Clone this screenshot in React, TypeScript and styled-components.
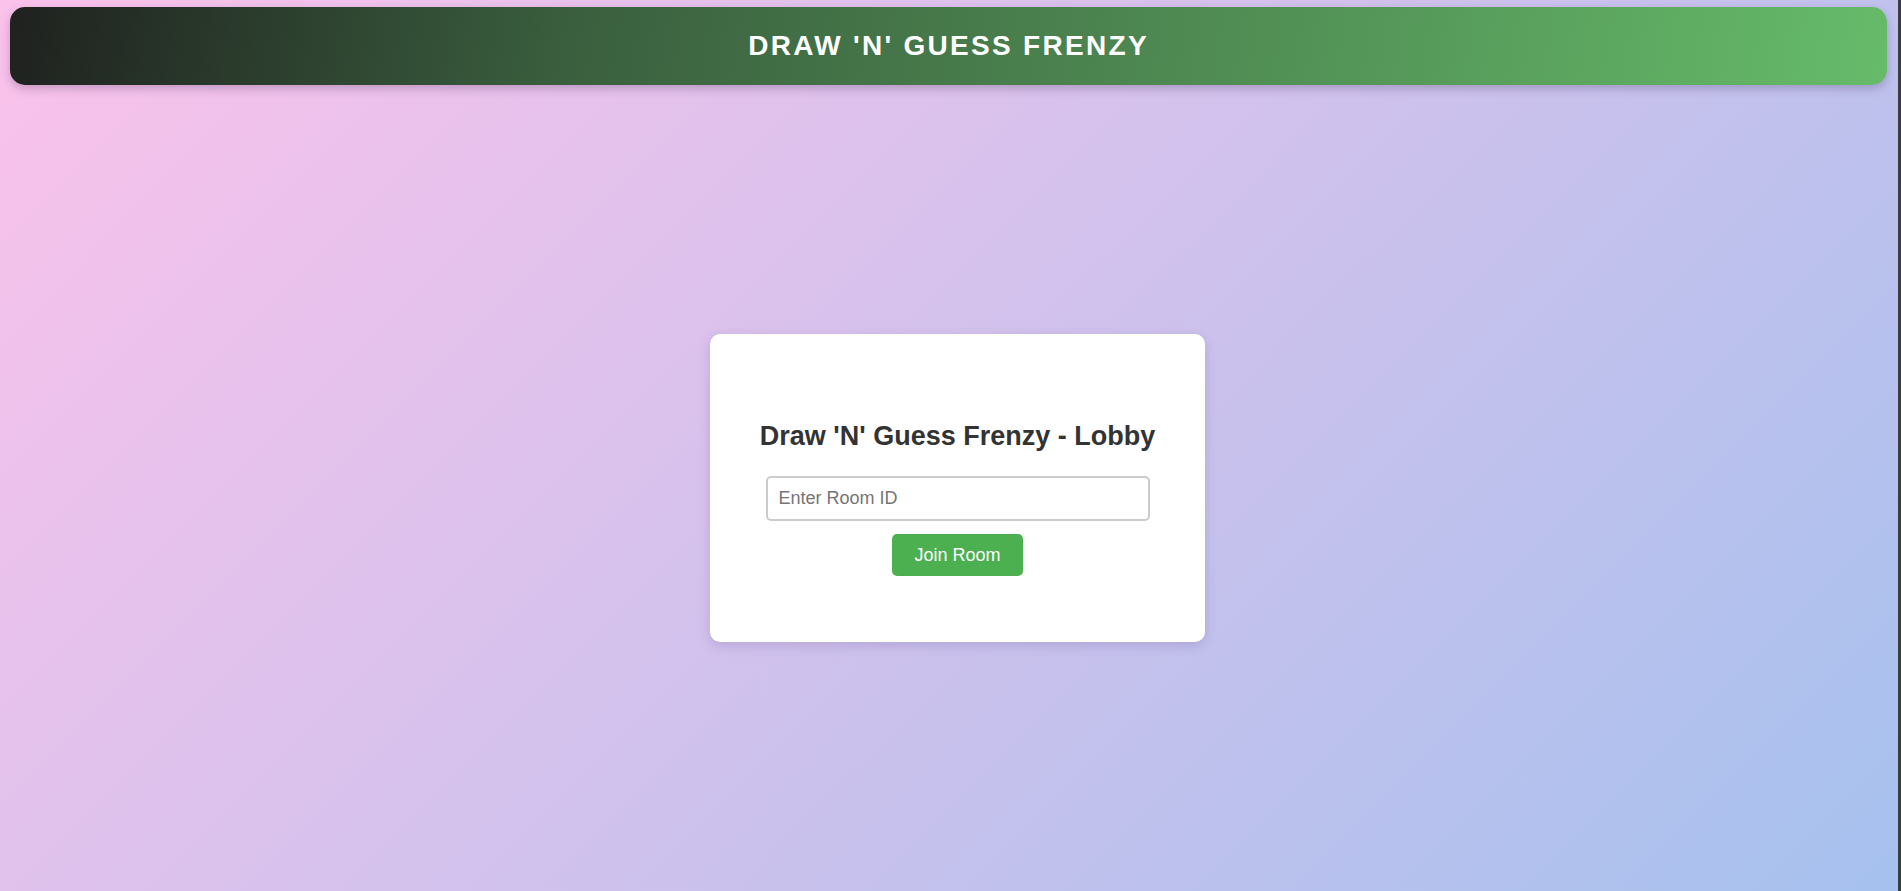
import React, { useState } from "react";
import styled, { createGlobalStyle } from "styled-components";

const GlobalStyle = createGlobalStyle`
  html, body {
    margin: 0;
    padding: 0;
    height: 100%;
  }
  html {
    background: #3c3c3c;
  }
  body {
    font-family: "Liberation Sans", Arial, sans-serif;
  }
  #root {
    height: 100%;
  }
`;

const Page = styled.div`
  margin-right: 3px;
  height: 100%;
  display: flex;
  flex-direction: column;
  background: linear-gradient(135deg, #fbc2eb 0%, #a6c1ee 100%);
`;

const Header = styled.header`
  margin: 7px 11px 0 10px;
  height: 78px;
  flex-shrink: 0;
  display: flex;
  align-items: center;
  justify-content: center;
  border-radius: 15px;
  background: linear-gradient(100deg, #1f211f 0%, #3a5f3e 30%, #66bb6a 100%);
  box-shadow: 0 4px 10px rgba(60, 30, 80, 0.25);
`;

const Title = styled.h1`
  margin: 0;
  color: #ffffff;
  font-size: 28px;
  font-weight: 700;
  letter-spacing: 2.3px;
  text-transform: uppercase;
`;

const Main = styled.main`
  flex: 1;
  display: flex;
  align-items: center;
  justify-content: center;
  padding-left: 17px;
  padding-bottom: 0;
`;

const Card = styled.div`
  width: 495px;
  box-sizing: border-box;
  padding: 86px 40px 66px;
  display: flex;
  flex-direction: column;
  align-items: center;
  background: #ffffff;
  border-radius: 10px;
  box-shadow: 0 4px 12px rgba(80, 50, 120, 0.18);
`;

const CardTitle = styled.h2`
  margin: 0 0 24px;
  font-size: 27px;
  line-height: 32px;
  font-weight: 700;
  color: #333333;
  white-space: nowrap;
`;

const RoomInput = styled.input`
  width: 384px;
  height: 45px;
  box-sizing: border-box;
  padding: 0 11px;
  border: 2px solid #cccccc;
  border-radius: 5px;
  font-family: "Liberation Sans", Arial, sans-serif;
  font-size: 18px;
  color: #333333;
  outline: none;

  &::placeholder {
    color: #757575;
  }
`;

const JoinButton = styled.button`
  margin-top: 13px;
  height: 42px;
  padding: 0 22px;
  border: none;
  border-radius: 5px;
  background: #4caf50;
  color: #ffffff;
  font-family: "Liberation Sans", Arial, sans-serif;
  font-size: 18px;
  cursor: pointer;
`;

const App: React.FC = () => {
  const [roomId, setRoomId] = useState("");

  return (
    <>
      <GlobalStyle />
      <Page>
        <Header>
          <Title>Draw 'N' Guess Frenzy</Title>
        </Header>
        <Main>
          <Card>
            <CardTitle>Draw 'N' Guess Frenzy - Lobby</CardTitle>
            <RoomInput
              type="text"
              placeholder="Enter Room ID"
              value={roomId}
              onChange={(e) => setRoomId(e.target.value)}
            />
            <JoinButton>Join Room</JoinButton>
          </Card>
        </Main>
      </Page>
    </>
  );
};

export default App;
